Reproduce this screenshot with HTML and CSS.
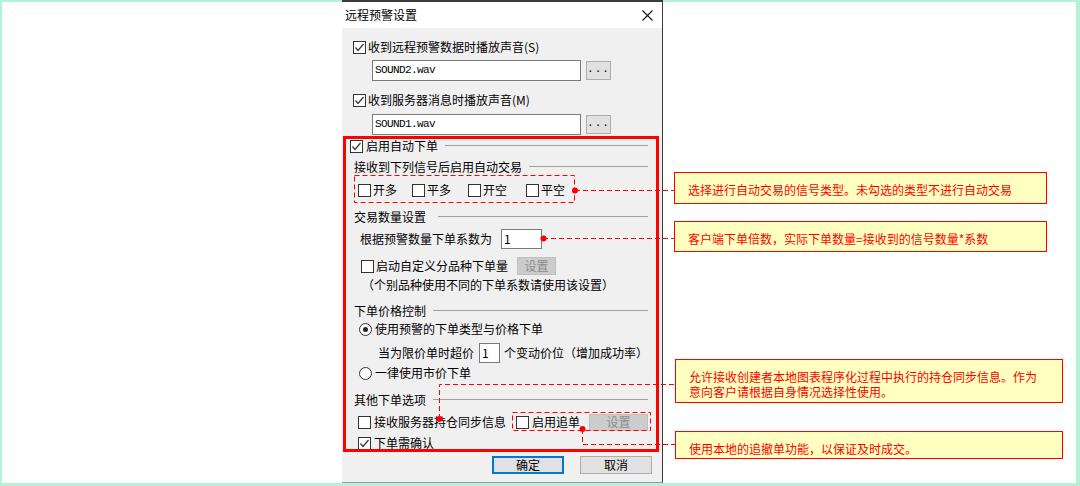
FILE: index.html
```html
<!DOCTYPE html>
<html lang="zh-CN">
<head>
    <meta charset="UTF-8">
    <title>远程预警设置</title>
    <link rel="stylesheet" href="styles.css">
</head>
<body>
<div class="stage">
    <div class="frame">
        <div class="dialog">
            <div class="titlebar">
                <span class="title">远程预警设置</span>
                <svg class="close" width="11" height="11" viewBox="0 0 11 11"><path d="M0.5 0.5 L10.5 10.5 M10.5 0.5 L0.5 10.5" stroke="#111" stroke-width="1.1" fill="none"/></svg>
            </div>
            <div class="dlg-body">
                <div class="row r-a">
                    <span class="cb"><svg viewBox="0 0 11 11"><path d="M1.5 5.5 L4 8.5 L9.5 2" stroke="#333" stroke-width="1.2" fill="none"/></svg></span>
                    <span>收到远程预警数据时播放声音(S)</span>
                </div>
                <div class="row r-b">
                    <div class="field file">SOUND2.wav</div>
                    <div class="btn dots">...</div>
                </div>
                <div class="row r-c">
                    <span class="cb"><svg viewBox="0 0 11 11"><path d="M1.5 5.5 L4 8.5 L9.5 2" stroke="#333" stroke-width="1.2" fill="none"/></svg></span>
                    <span>收到服务器消息时播放声音(M)</span>
                </div>
                <div class="row r-d">
                    <div class="field file">SOUND1.wav</div>
                    <div class="btn dots">...</div>
                </div>

                <div class="row r-e">
                    <span class="cb"><svg viewBox="0 0 11 11"><path d="M1.5 5.5 L4 8.5 L9.5 2" stroke="#333" stroke-width="1.2" fill="none"/></svg></span>
                    <span class="gap3">启用自动下单</span>
                    <span class="rule"></span>
                </div>
                <div class="row r-f">
                    <span>接收到下列信号后启用自动交易</span>
                    <span class="rule"></span>
                </div>
                <div class="row r-g">
                    <label class="opt"><span class="cb"></span><span>开多</span></label>
                    <label class="opt"><span class="cb"></span><span>平多</span></label>
                    <label class="opt"><span class="cb"></span><span>开空</span></label>
                    <label class="opt"><span class="cb"></span><span>平空</span></label>
                </div>
                <div class="row r-h">
                    <span>交易数量设置</span>
                    <span class="rule wide"></span>
                </div>
                <div class="row r-i">
                    <span>根据预警数量下单系数为</span>
                    <div class="field num">1</div>
                </div>
                <div class="row r-j">
                    <span class="cb"></span>
                    <span>启动自定义分品种下单量</span>
                    <div class="btn off small">设置</div>
                </div>
                <div class="row r-k">
                    <span>（个别品种使用不同的下单系数请使用该设置）</span>
                </div>
                <div class="row r-l">
                    <span>下单价格控制</span>
                    <span class="rule"></span>
                </div>
                <div class="row r-m">
                    <span class="radio on"></span>
                    <span class="gap3">使用预警的下单类型与价格下单</span>
                </div>
                <div class="row r-n">
                    <span>当为限价单时超价</span>
                    <div class="field tick">1</div>
                    <span class="after">个变动价位（增加成功率）</span>
                </div>
                <div class="row r-o">
                    <span class="radio"></span>
                    <span class="gap3">一律使用市价下单</span>
                </div>
                <div class="row r-p">
                    <span>其他下单选项</span>
                    <span class="rule"></span>
                </div>
                <div class="row r-q">
                    <span class="cb"></span>
                    <span class="gap3">接收服务器持仓同步信息</span>
                    <span class="cb chase"></span>
                    <span class="gap3">启用追单</span>
                    <div class="btn off wide">设置</div>
                </div>
                <div class="row r-r">
                    <span class="cb"><svg viewBox="0 0 11 11"><path d="M1.5 5.5 L4 8.5 L9.5 2" stroke="#333" stroke-width="1.2" fill="none"/></svg></span>
                    <span class="gap3">下单需确认</span>
                </div>
                <div class="row r-s">
                    <div class="btn push default">确定</div>
                    <div class="btn push">取消</div>
                </div>
            </div>
        </div>

        <div class="notes">
            <div class="note n1">选择进行自动交易的信号类型。未勾选的类型不进行自动交易</div>
            <div class="note n2">客户端下单倍数，实际下单数量=接收到的信号数量*系数</div>
            <div class="note n3">
                <div class="line">允许接收创建者本地图表程序化过程中执行的持仓同步信息。作为</div>
                <div class="line">意向客户请根据自身情况选择性使用。</div>
            </div>
            <div class="note n4">使用本地的追撤单功能，以保证及时成交。</div>
        </div>
    </div>

    <!-- 标注：红框、虚线框与引线 -->
    <svg class="marks" width="1080" height="486" viewBox="0 0 1080 486">
        <rect x="344.5" y="137.5" width="313" height="313" fill="none" stroke="#ff0000" stroke-width="3"/>
        <g fill="none" stroke="#ff0000" stroke-width="1" stroke-dasharray="5 3">
            <rect x="354.5" y="175.5" width="220" height="27"/>
            <rect x="512.5" y="412.5" width="138" height="18"/>
            <path d="M575 190.5 H674"/>
            <path d="M543 238.5 H674"/>
            <path d="M439.5 419 V384.5 H675"/>
            <path d="M582.5 429 V444.5 H675"/>
        </g>
        <g fill="#ff0000">
            <circle cx="575" cy="190.5" r="3"/>
            <circle cx="543.5" cy="238.5" r="3"/>
            <circle cx="439.5" cy="419" r="3"/>
            <circle cx="582.5" cy="429" r="3"/>
        </g>
    </svg>
</div>
</body>
</html>
```

FILE: styles.css
```css
body {
    margin: 0;
    font-family: "Noto Sans CJK SC", "Liberation Sans", sans-serif;
    font-size: 12px;
    color: #000;
}
.stage {
    position: relative;
    width: 1080px;
    height: 486px;
    overflow: hidden;
    background: #fff;
}
.frame {
    box-sizing: border-box;
    width: 1080px;
    height: 486px;
    border-style: solid;
    border-color: #b2f3d6;
    border-width: 2px 4px 3px 2px;
    display: flex;
    align-items: flex-start;
}

/* 对话框 */
.dialog {
    box-sizing: border-box;
    margin-top: -2px;
    margin-left: 340px;
    width: 321px;
    height: 483px;
    border-top: 2px solid #3a3a3a;
    border-right: 1px solid #3a3a3a;
    border-bottom: 1px solid #9a9a9a;
    display: flex;
    flex-direction: column;
    background: #fff;
}
.titlebar {
    height: 26px;
    flex: none;
    display: flex;
    align-items: center;
    justify-content: space-between;
    padding: 0 9px 0 3px;
}
.title {
    line-height: 14px;
}
.close {
    display: block;
}
.dlg-body {
    flex: 1;
    background: #f0f0f0;
    padding-right: 14px;
}
.row {
    display: flex;
    align-items: center;
    height: 18px;
    line-height: 14px;
    white-space: nowrap;
}
.cb {
    box-sizing: border-box;
    flex: none;
    width: 13px;
    height: 13px;
    border: 1px solid #333;
    background: #fff;
    margin-right: 2px;
}
.cb svg {
    display: block;
    width: 11px;
    height: 11px;
}
.radio {
    box-sizing: border-box;
    flex: none;
    width: 13px;
    height: 13px;
    border: 1px solid #333;
    border-radius: 50%;
    background: #fff;
    display: flex;
    align-items: center;
    justify-content: center;
}
.radio.on::after {
    content: "";
    width: 5px;
    height: 5px;
    border-radius: 50%;
    background: #222;
}
.gap3 {
    margin-left: 1px;
}
.radio + .gap3 {
    margin-left: 3px;
}
.rule {
    flex: 1;
    height: 1px;
    background: #a0a0a0;
    margin-left: 7px;
    margin-top: -1px;
}
.rule.wide {
    margin-left: 12px;
}
.field {
    box-sizing: border-box;
    background: #fff;
    border: 1px solid #7a7a7a;
    padding-left: 2px;
    line-height: 18px;
}
.file {
    width: 209px;
    height: 21px;
    font-family: "Liberation Mono", monospace;
    font-size: 11px;
    letter-spacing: -0.6px;
}
.btn {
    box-sizing: border-box;
    display: flex;
    align-items: center;
    justify-content: center;
    background: #e1e1e1;
    border: 1px solid #adadad;
}
.dots {
    width: 25px;
    height: 19px;
    margin-left: 5px;
    font-family: "Liberation Mono", monospace;
    font-size: 11px;
    letter-spacing: 1px;
    padding-bottom: 3px;
}
.btn.off {
    background: #cccccc;
    border-color: #bfbfbf;
    color: #8d8d8d;
}
.btn.small {
    width: 39px;
    height: 18px;
    margin-left: 9px;
}
.btn.wide {
    width: 62px;
    height: 17px;
    margin-left: 9px;
}
.num {
    width: 41px;
    height: 20px;
    margin-left: 9px;
}
.tick {
    width: 32px;
    height: 20px;
    margin-left: 5px;
}
.after {
    margin-left: 4px;
}
.opt {
    display: flex;
    align-items: center;
}
.opt:nth-child(1) { width: 54px; }
.opt:nth-child(2) { width: 56px; }
.opt:nth-child(3) { width: 58px; }
.cb.chase {
    margin-left: 10px;
}
.push {
    width: 72px;
    height: 18px;
    margin-left: 16px;
}
.push.default {
    border: 2px solid #0078d7;
}

/* 每一行的位置 */
.r-a { margin-top: 10px; padding-left: 11px; }
.r-b { margin-top: 4px; padding-left: 30px; height: 21px; }
.r-c { margin-top: 10px; padding-left: 11px; }
.r-d { margin-top: 5px; padding-left: 30px; height: 21px; }
.r-e { margin-top: 2px; padding-left: 8px; }
.r-f { margin-top: 3px; padding-left: 12px; }
.r-g { margin-top: 5px; padding-left: 16px; }
.r-h { margin-top: 9px; padding-left: 12px; }
.r-i { margin-top: 3px; padding-left: 18px; height: 20px; }
.r-j { margin-top: 8px; padding-left: 19px; }
.r-k { margin-top: 1px; padding-left: 20px; }
.r-l { margin-top: 8px; padding-left: 12px; }
.r-m { margin-top: 0; padding-left: 17px; }
.r-n { margin-top: 5px; padding-left: 36px; height: 20px; }
.r-o { margin-top: 1px; padding-left: 17px; }
.r-p { margin-top: 9px; padding-left: 12px; }
.r-q { margin-top: 4px; padding-left: 16px; }
.r-r { margin-top: 3px; padding-left: 16px; }
.r-s { margin-top: 4px; justify-content: flex-end; margin-right: -4px; }

/* 说明框 */
.notes {
    margin-left: 11px;
    margin-top: 170px;
    display: flex;
    flex-direction: column;
}
.note {
    box-sizing: border-box;
    background: #ffffc0;
    border: 1px solid #ff0000;
    color: #ff0000;
    padding-left: 13px;
    line-height: 14px;
    white-space: nowrap;
}
.note .line {
    font-size: 12px;
    line-height: 14px;
    height: 14px;
}
.n1 { width: 373px; height: 32px; padding-top: 10px; }
.n2 { width: 373px; height: 31px; margin-top: 17px; padding-top: 10px; }
.n3 { width: 388px; height: 44px; margin-top: 107px; margin-left: 1px; padding-top: 9px; line-height: 15px; }
.n3 .line { height: 15px; line-height: 15px; }
.n4 { width: 388px; height: 28px; margin-top: 28px; margin-left: 1px; padding-top: 10px; }

.marks {
    position: absolute;
    left: 0;
    top: 0;
    pointer-events: none;
}
```
